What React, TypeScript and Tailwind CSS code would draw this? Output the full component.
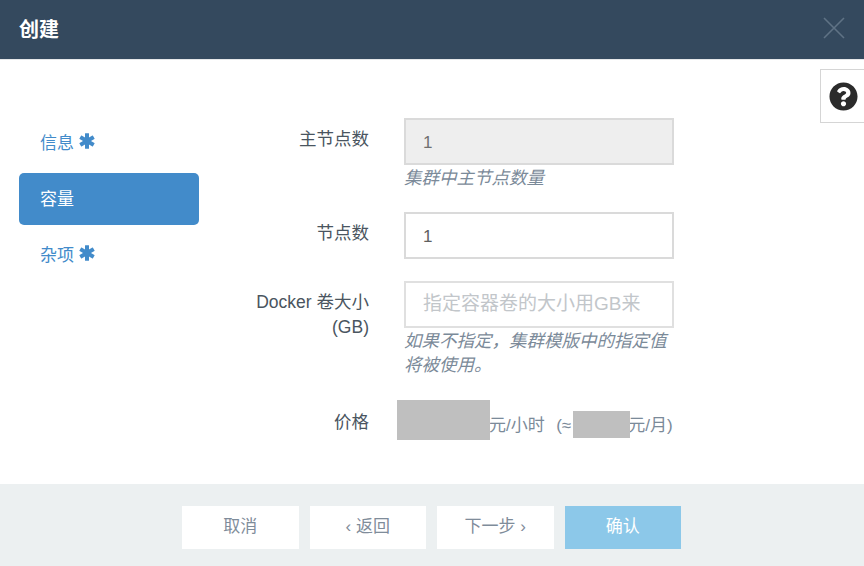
import { FaQuestionCircle } from "react-icons/fa";

const font = { fontFamily: '"Liberation Sans","Noto Sans CJK SC",sans-serif' };

function Star() {
  return (
    <svg viewBox="0 0 16 16" className="w-[16px] h-[16px] ml-[5px] mb-[7px]" fill="#428bca">
      <rect x="6" y="0.2" width="4" height="15.6" rx="0.4" />
      <rect x="6" y="0.2" width="4" height="15.6" rx="0.4" transform="rotate(60 8 8)" />
      <rect x="6" y="0.2" width="4" height="15.6" rx="0.4" transform="rotate(120 8 8)" />
    </svg>
  );
}

function NavItem({ label, active, star }: { label: string; active?: boolean; star?: boolean }) {
  return (
    <div
      className={`h-[52px] pl-[21px] pt-[2px] flex items-center rounded-[5px] text-[17px] ${
        active ? "bg-[#428bca] text-white" : "text-[#428bca]"
      }`}
    >
      {label}
      {star && <Star />}
    </div>
  );
}

function Row({ label, children, className }: { label: React.ReactNode; children: React.ReactNode; className?: string }) {
  return (
    <div className={`flex gap-[35px] ${className ?? ""}`}>
      <div className="w-[170px] text-right text-[17.5px] leading-[25px] pt-[9px] text-[#4a5560]">{label}</div>
      <div className="w-[270px]">{children}</div>
    </div>
  );
}

function Help({ children }: { children: React.ReactNode }) {
  return <div className="text-[17.5px] leading-[24px] pt-[1px] italic text-[#7b8a99]">{children}</div>;
}

function Btn({ children, primary }: { children: React.ReactNode; primary?: boolean }) {
  return (
    <div
      className={`w-[116.5px] h-[43px] flex items-center justify-center pb-[2px] text-[17px] ${
        primary ? "bg-[#8cc8e9] text-white" : "bg-white text-[#7f8c9a]"
      }`}
    >
      {children}
    </div>
  );
}

export default function App() {
  return (
    <div className="w-[864px] h-[566px] flex flex-col bg-white overflow-hidden relative" style={font}>
      <div className="h-[60px] bg-[#34495e] flex items-center justify-between pl-[19px] pr-[18px] border-b border-[#e5e7e9] shrink-0">
        <span className="text-[20px] text-white font-bold">创建</span>
        <svg viewBox="0 0 24 24" className="w-[24px] h-[24px] mb-[3px]" stroke="#5f7285" strokeWidth="1.6" fill="none">
          <path d="M2 2 L22 22 M22 2 L2 22" />
        </svg>
      </div>

      <div className="flex-1 flex relative">
        <div className="w-[180px] ml-[19px] pt-[57px] flex flex-col gap-[4px]">
          <NavItem label="信息" star />
          <NavItem label="容量" active />
          <NavItem label="杂项" star />
        </div>

        <div className="pt-[58px] relative">
          <Row label="主节点数" className="mb-[22px]">
            <div className="h-[47px] bg-[#eeeeee] border-2 border-[#dadada] flex items-center pl-[17px] pt-[2px] text-[17px] text-[#707070]">1</div>
            <Help>集群中主节点数量</Help>
          </Row>
          <Row label="节点数" className="mb-[22px]">
            <div className="h-[47px] bg-white border-2 border-[#dadada] flex items-center pl-[17px] pt-[2px] text-[17px] text-[#606060]">1</div>
          </Row>
          <Row label={<>Docker 卷大小<br />(GB)</>} className="mb-[36px]">
            <div className="h-[47px] bg-white border-2 border-[#e0e0e0] flex items-center pl-[17px] text-[19px] text-[#c2c6ca] whitespace-nowrap overflow-hidden">指定容器卷的大小用GB来</div>
            <Help>如果不指定，集群模版中的指定值将被使用。</Help>
          </Row>
          <div className="flex gap-[35px] h-[24px] items-center">
            <div className="w-[170px] text-right text-[17.5px] text-[#4a5560] mb-[5px]">价格</div>
            <div className="text-[17px] text-[#7b8a99] whitespace-nowrap pl-[85px] pt-[1px]">
              元/小时&nbsp; <span className="ml-[2px]">(≈</span><span className="inline-block w-[57px]" />元/月)
            </div>
          </div>
          <div className="absolute left-[198px] top-[340px] w-[93px] h-[40px] bg-[#bfbfbf]" />
          <div className="absolute left-[374px] top-[351px] w-[57px] h-[27px] bg-[#bfbfbf]" />
        </div>

        <div className="absolute right-0 top-[9px] w-[44px] h-[54px] border border-r-0 border-[#d5d5d5] bg-white flex items-center justify-center">
          <FaQuestionCircle className="w-[29px] h-[29px] text-[#2b2b2b] ml-[1px]" />
        </div>
      </div>

      <div className="h-[82px] bg-[#ecf0f1] flex justify-center items-start pt-[22px] gap-[11px] shrink-0 pr-[1px]">
        <Btn>取消</Btn>
        <Btn>‹ 返回</Btn>
        <Btn>下一步 ›</Btn>
        <Btn primary>确认</Btn>
      </div>
    </div>
  );
}
